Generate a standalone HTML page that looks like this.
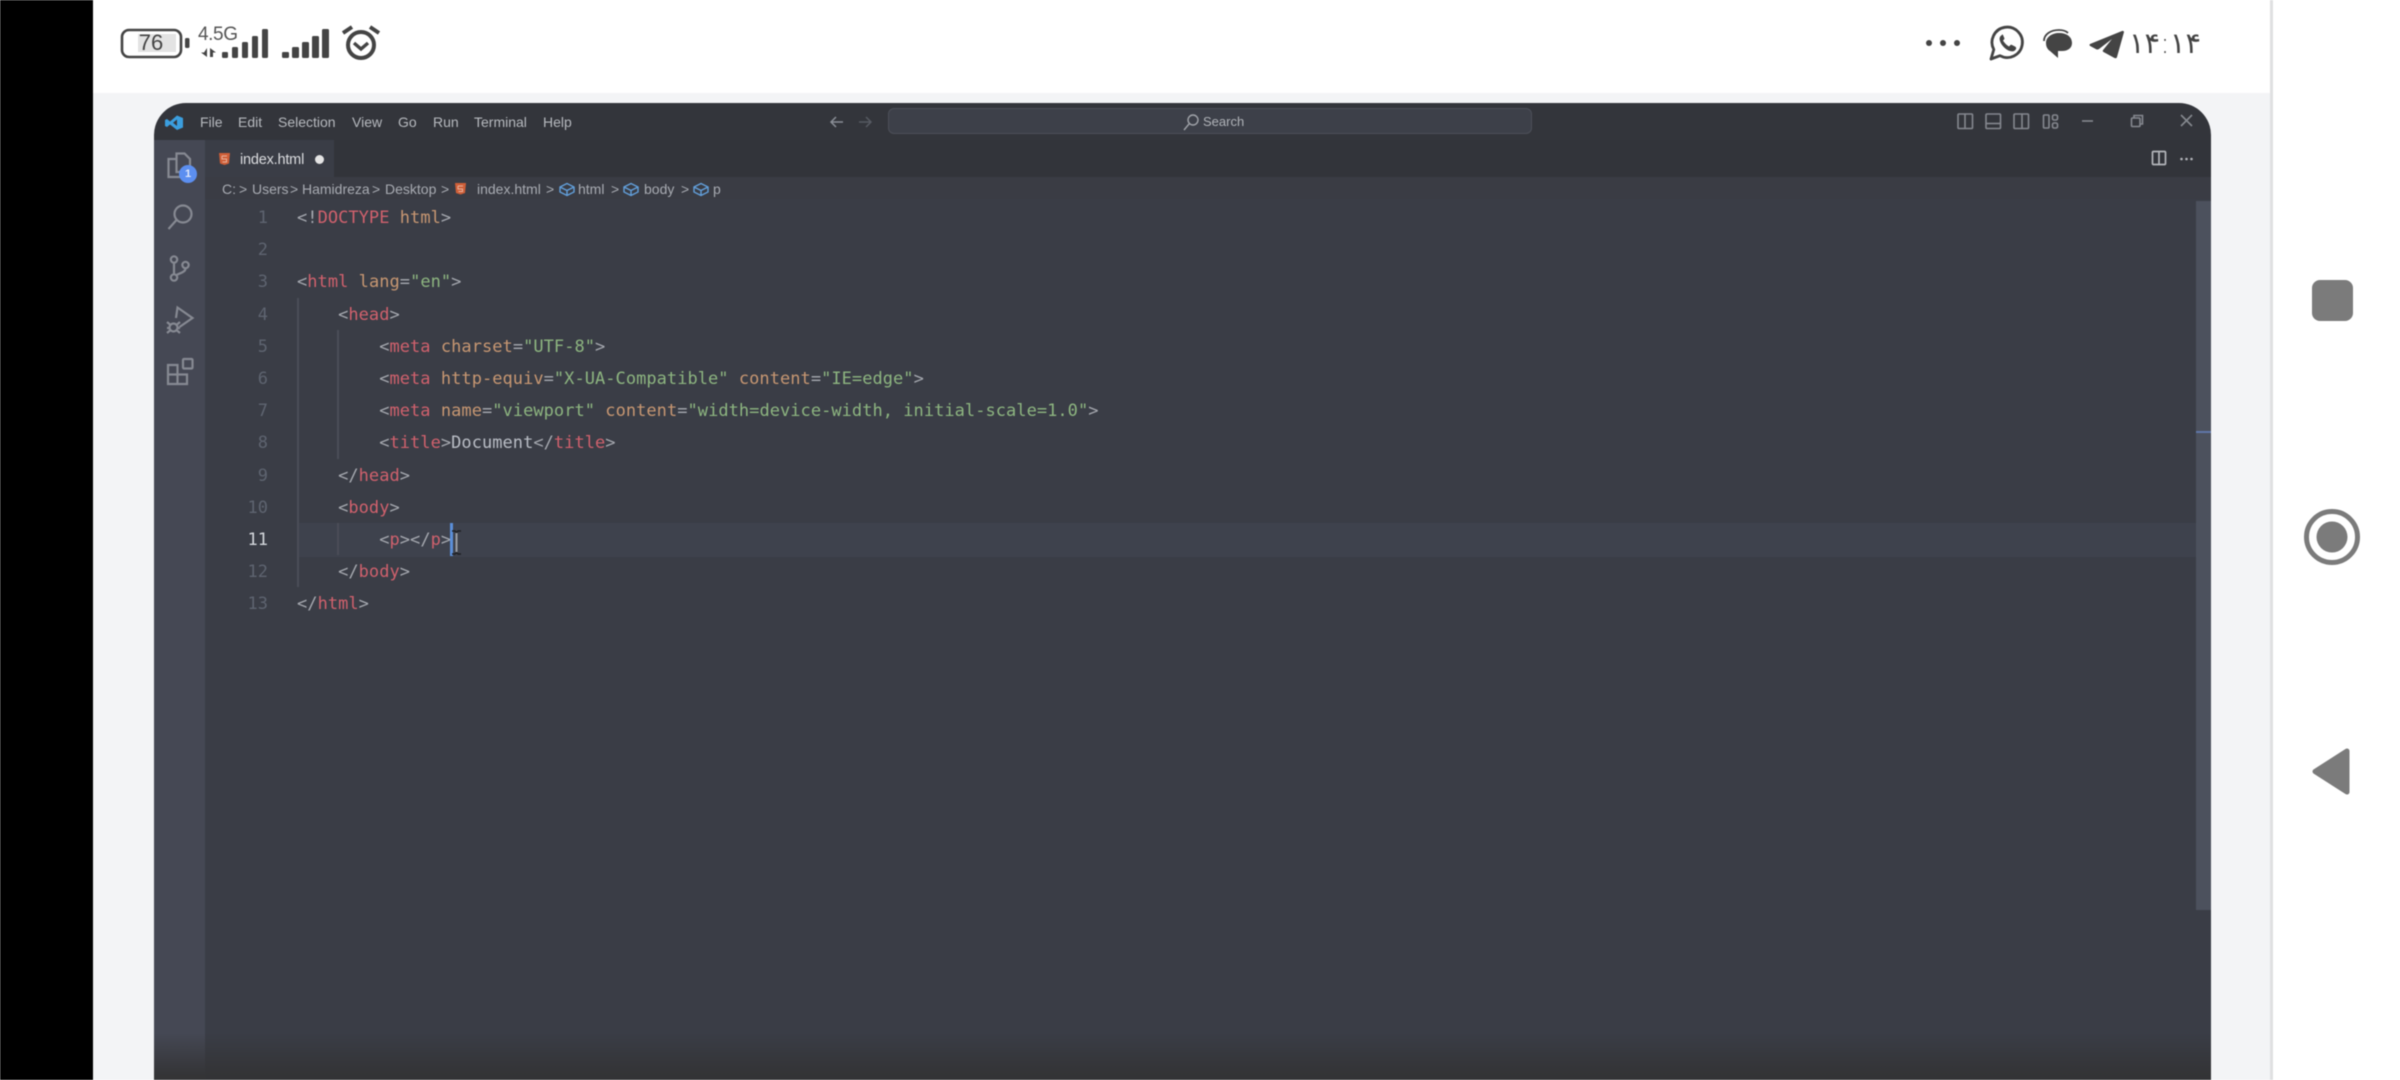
<!DOCTYPE html>
<html lang="en"><head><meta charset="utf-8"><title>VS Code screenshot</title>
<style>
html,body{margin:0;padding:0;width:2400px;height:1080px;overflow:hidden;background:#fff}
*{box-sizing:border-box}
.a{position:absolute}
#win{position:absolute;left:154px;top:103px;width:2057px;height:977px;border-radius:32px 32px 0 0;overflow:hidden;background:#33353b}
#stage{position:absolute;left:0;top:0;width:2400px;height:1080px;font-family:"Liberation Sans",sans-serif;filter:blur(.45px)}
.m{position:absolute;top:112px;font-size:14px;line-height:20px;color:#b6b9be;white-space:nowrap}
.c{position:absolute;left:297px;height:32px;line-height:32px;font-family:"DejaVu Sans Mono","Liberation Mono",monospace;font-size:17px;letter-spacing:.04px;white-space:pre;color:#a6a9b0}
.n{position:absolute;left:228px;width:40px;height:32px;line-height:32px;text-align:right;font-family:"DejaVu Sans Mono","Liberation Mono",monospace;font-size:17px;color:#5e6470}
.t{color:#d0616d}.k{color:#c79772}.s{color:#8db580}.x{color:#b9bdc5}
.b{position:absolute;top:179px;font-size:14px;line-height:20px;color:#a8abb2;white-space:nowrap}
.g{position:absolute;width:1.5px;background:#4a4d57}
</style></head><body>
<div id="stage">
<div class="a" style="left:0;top:0;width:93px;height:1080px;background:#000"></div>
<div class="a" style="left:93px;top:0;width:2177px;height:93px;background:#fff"></div>
<div class="a" style="left:93px;top:93px;width:2177px;height:987px;background:#f3f4f6"></div>
<div class="a" style="left:2270px;top:0;width:3px;height:1080px;background:#dfe0e1"></div>

<!-- status bar left -->
<svg class="a" style="left:110px;top:20px" width="280" height="50" viewBox="110 20 280 50">
<rect x="122" y="30" width="59" height="27" rx="7" fill="none" stroke="#444" stroke-width="2.6"/>
<rect x="138" y="34" width="38" height="18" fill="#e3e3e3"/>
<rect x="185" y="38" width="4.500" height="10" rx="1.5" fill="#444"/>
<path d="M207 48v9l-6-4.500h3zM210 48l6 4.500h-3v4.500h-3z" fill="#444"/>
<g fill="#444">
<rect x="222" y="52" width="6" height="6" rx="1.200"/><rect x="232" y="47" width="6" height="11" rx="1.500"/><rect x="242" y="42" width="6" height="16" rx="1.500"/><rect x="252" y="36" width="6" height="22" rx="1.500"/><rect x="262" y="29" width="6" height="29" rx="1.500"/>
<rect x="282" y="52" width="7" height="6" rx="1.200"/><rect x="292" y="47" width="7" height="11" rx="1.500"/><rect x="302" y="42" width="7" height="16" rx="1.500"/><rect x="312" y="36" width="7" height="22" rx="1.500"/><rect x="322" y="29" width="7" height="29" rx="1.500"/>
</g>
<circle cx="361" cy="45" r="13" fill="none" stroke="#444" stroke-width="4"/>
<path d="M354 43l7 6 7-6" fill="none" stroke="#444" stroke-width="3.4"/>
<path d="M343 33l9-6M379 33l-9-6" fill="none" stroke="#444" stroke-width="4"/>
</svg>
<div class="a" style="left:136px;top:31px;width:30px;height:24px;line-height:24px;text-align:center;font-size:22px;color:#444">76</div>
<div class="a" style="left:198px;top:23px;font-size:19px;line-height:24px;color:#555;letter-spacing:-.4px">4.5G</div>

<!-- status bar right -->
<svg class="a" style="left:1920px;top:20px" width="210" height="46" viewBox="1920 20 210 46">
<g fill="#444"><circle cx="1929" cy="43" r="3"/><circle cx="1943" cy="43" r="3"/><circle cx="1957" cy="43" r="3"/></g>
<path d="M1991 59l2.800-9.500A15.200 15.200 0 1 1 2000 55.700z" fill="none" stroke="#444" stroke-width="2.800" stroke-linejoin="round"/>
<path d="M2002 35c-2 1-3 3-2 6 1 4 6 9 10 10 3 1 5 0 6-2 .5-1 0-2-1-2.500l-3-1.500c-1-.5-1.500 0-2 .5l-1 1c-2-1-5-4-6-6l1-1c.5-.5.5-1 .2-1.800l-1.200-2.700c-.4-.7-1-.8-1-.5z" fill="#444"/>
<path d="M2059 33c8 0 13 4 13 10 0 5-4 8-10 8h-4v7l-8-7c-3-2-4-5-4-8 0-6 6-10 13-10z" fill="#444"/>
<path d="M2044 41c0-7 7-11 15-11 4 0 7 1 9 3" fill="none" stroke="#444" stroke-width="1.800"/>
<path d="M2090 44l32-13c1-.5 2 .2 2 1l-7 25c-.3 1.300-1.500 1.500-2.500 1l-11-6c-1-.5-1-1.500-.2-2.200L2112 39 2099 49c-1 .6-1.800.6-2.800.2l-6-3.200c-1-.5-1-1.600 0-2z" fill="#444"/>
</svg>
<div class="a" style="left:2126px;top:24px;width:78px;height:38px;line-height:38px;font-family:'DejaVu Sans',sans-serif;font-size:29px;color:#444;text-align:center;letter-spacing:-1.6px;direction:ltr;font-weight:300">۱۴:۱۴</div>

<!-- right nav -->
<div class="a" style="left:2312px;top:280px;width:41px;height:41px;border-radius:8px;background:#7b7b7b"></div>
<svg class="a" style="left:2300px;top:500px" width="70" height="310" viewBox="2300 500 70 310">
<circle cx="2332" cy="537" r="25.500" fill="none" stroke="#7b7b7b" stroke-width="5"/>
<circle cx="2332" cy="537" r="15.500" fill="#7b7b7b"/>
<path d="M2347 751L2315 771.500 2347 792z" fill="#7b7b7b" stroke="#7b7b7b" stroke-width="5" stroke-linejoin="round"/>
</svg>

<!-- VS Code window -->
<div id="win">
<div class="a" style="left:0;top:37px;width:51px;height:940px;background:#454854"></div>
<div class="a" style="left:51px;top:37px;width:2006px;height:37px;background:#32343a"></div>
<div class="a" style="left:51px;top:37px;width:129px;height:37px;background:#3a3d46"></div>
<div class="a" style="left:51px;top:74px;width:2006px;height:22px;background:#3a3c44"></div>
<div class="a" style="left:51px;top:96px;width:2006px;height:881px;background:#3a3d46"></div>
<div class="a" style="left:144px;top:420px;width:1898px;height:34px;background:#3e424d"></div>
<div class="a" style="left:2042px;top:98px;width:15px;height:709px;background:#4c515d"></div>
<div class="a" style="left:2042px;top:328px;width:15px;height:2px;background:#5f76a8"></div>
<div class="a" style="left:0;top:930px;width:2057px;height:47px;background:linear-gradient(to bottom,rgba(51,51,53,0),rgba(51,51,53,.95) 90%)"></div>
</div>

<!-- title bar -->
<svg class="a" style="left:160px;top:110px" width="28" height="24" viewBox="160 110 28 24">
<path d="M177 115.500l6 2.500v9.500l-6 2.500-7-5.500-3 2.500-2-1v-6l2-1 3 2.500z" fill="#3b9ede"/>
<path d="M177 119.500l-4 3.300 4 3.200z" fill="#33353b"/>
</svg>
<div class="m" style="left:200px">File</div><div class="m" style="left:238px">Edit</div><div class="m" style="left:278px">Selection</div><div class="m" style="left:352px">View</div><div class="m" style="left:398px">Go</div><div class="m" style="left:433px">Run</div><div class="m" style="left:474px">Terminal</div><div class="m" style="left:543px">Help</div>

<svg class="a" style="left:825px;top:110px" width="55" height="24" viewBox="825 110 55 24">
<path d="M843 122h-12M836 117l-5 5 5 5" fill="none" stroke="#8a8e96" stroke-width="1.500"/>
<path d="M859 122h12M866 117l5 5-5 5" fill="none" stroke="#565a62" stroke-width="1.500"/>
</svg>
<div class="a" style="left:888px;top:108px;width:644px;height:26px;background:#3d4049;border:1.500px solid #4c4f58;border-radius:6px"></div>
<svg class="a" style="left:1180px;top:111px" width="22" height="22" viewBox="1180 111 22 22">
<circle cx="1193" cy="120" r="5" fill="none" stroke="#a0a3a9" stroke-width="1.400"/><path d="M1189 124l-5 6" stroke="#a0a3a9" stroke-width="1.400"/>
</svg>
<div class="m" style="left:1203px;color:#b0b3b8;font-size:13px">Search</div>

<svg class="a" style="left:1950px;top:105px" width="260" height="70" viewBox="1950 105 260 70">
<g fill="none" stroke="#85888f" stroke-width="1.600">
<rect x="1958" y="114" width="14.500" height="14.500" rx="1"/><path d="M1965 114v14.500"/>
<rect x="1986" y="114" width="14.500" height="14.500" rx="1"/><path d="M1986 123.500h14.500"/>
<rect x="2014" y="114" width="14.500" height="14.500" rx="1"/><path d="M2022 114v14.500"/>
<rect x="2043.500" y="115" width="5.500" height="13" rx="1"/><rect x="2052.500" y="115" width="5" height="5" rx="1.500"/><rect x="2052.500" y="123" width="5" height="5" rx="1.500"/>
<path d="M2082 121h11"/>
<rect x="2131.500" y="118" width="8.500" height="8.500" rx="1"/><path d="M2134 118v-2.500h8.500v8.500h-2.500"/>
<path d="M2181 115l11 11M2192 115l-11 11"/>
</g>
<g fill="none" stroke="#b4b6bb" stroke-width="1.700"><rect x="2152.500" y="151.500" width="13" height="13" rx="1"/><path d="M2159 151.500v13"/></g>
<g fill="#b4b6bb"><circle cx="2181.500" cy="159" r="1.300"/><circle cx="2186.500" cy="159" r="1.300"/><circle cx="2191.500" cy="159" r="1.300"/></g>
</svg>

<!-- activity bar -->
<svg class="a" style="left:160px;top:148px" width="40" height="240" viewBox="160 148 40 240">
<g fill="none" stroke="#868992" stroke-width="2.200">
<path d="M176 159h-7.500v18h14v-5"/><path d="M176.500 153.500h8l5.500 5.500v13h-13.500z"/>
<circle cx="183" cy="214" r="8.500"/><path d="M176.500 220l-8 9" />
<circle cx="174" cy="259.500" r="3.200"/><circle cx="174" cy="277.500" r="3.200"/><circle cx="185.500" cy="265" r="3.200"/><path d="M174 263v11M185.500 268.500c0 4-7 5-9 6.500"/>
<path d="M176 318l1.500-10.500 15 10.500-13 9"/><circle cx="173.500" cy="327.500" r="4"/><path d="M167 322l3 2.500M180 322l-3 2.500M167 328h2.500M180 328h-2.500M167 333l3-2.500M180 333l-3-2.500"/>
<path d="M168 365h9.500v9.500H187v9.500h-19zM168 374.500h9.500v9.500"/><rect x="183" y="359" width="9.500" height="9.500" rx="1"/>
</g>
</svg>
<div class="a" style="left:179px;top:165px;width:18px;height:18px;border-radius:50%;background:#5c8ff0;color:#dfe8fb;font-size:11px;font-weight:bold;line-height:18px;text-align:center">1</div>

<!-- tab -->
<svg class="a" style="left:217px;top:151px" width="16" height="16" viewBox="217 151 16 16">
<path d="M219 153h11l-1 10.500-4.500 1.500-4.500-1.500z" fill="#cf5f38"/><path d="M222 156h5M222 156v3h4.500v3h-4" fill="none" stroke="#e8b29e" stroke-width="1"/>
</svg>
<div class="a" style="left:240px;top:150px;font-size:14.500px;line-height:20px;color:#dcdde0;letter-spacing:-.2px">index.html</div>
<div class="a" style="left:314.500px;top:154.500px;width:9px;height:9px;border-radius:50%;background:#e4e4e4"></div>

<!-- breadcrumbs -->
<div class="b" style="left:222px">C:</div><div class="b" style="left:239px">&gt;</div>
<div class="b" style="left:252px">Users</div><div class="b" style="left:290px">&gt;</div>
<div class="b" style="left:302px">Hamidreza</div><div class="b" style="left:372px">&gt;</div>
<div class="b" style="left:385px">Desktop</div><div class="b" style="left:441px">&gt;</div>
<div class="b" style="left:477px">index.html</div><div class="b" style="left:546px">&gt;</div>
<div class="b" style="left:578px">html</div><div class="b" style="left:611px">&gt;</div>
<div class="b" style="left:644px">body</div><div class="b" style="left:681px">&gt;</div>
<div class="b" style="left:713px">p</div>
<svg class="a" style="left:452px;top:180px" width="270" height="18" viewBox="452 180 270 18">
<path d="M455 183h11l-1 10-4.500 1.500-4.500-1.500z" fill="#cf5f38"/><path d="M458 186h5M458 186v3h4.500v2.500h-4" fill="none" stroke="#e8b29e" stroke-width="1"/>
<g fill="none" stroke="#62a0dc" stroke-width="1.400">
<path d="M560 187l7-3.500 7 3.500v5l-7 3.500-7-3.500zM560 187l7 3.500 7-3.500M567 190.500v5"/>
<path d="M624 187l7-3.500 7 3.500v5l-7 3.500-7-3.500zM624 187l7 3.500 7-3.500M631 190.500v5"/>
<path d="M694 187l7-3.500 7 3.500v5l-7 3.500-7-3.500zM694 187l7 3.500 7-3.500M701 190.500v5"/>
</g>
</svg>

<!-- indent guides -->
<div class="g" style="left:297px;top:298px;height:289px"></div>
<div class="g" style="left:337px;top:330px;height:129px"></div>
<div class="g" style="left:337px;top:523px;height:32px"></div>

<!-- line numbers -->
<div class="n" style="top:201.500px">1</div>
<div class="n" style="top:233.500px">2</div>
<div class="n" style="top:266px">3</div>
<div class="n" style="top:298.500px">4</div>
<div class="n" style="top:330.500px">5</div>
<div class="n" style="top:363px">6</div>
<div class="n" style="top:395px">7</div>
<div class="n" style="top:427px">8</div>
<div class="n" style="top:459.500px">9</div>
<div class="n" style="top:491.500px">10</div>
<div class="n" style="top:524px;color:#d3d6db">11</div>
<div class="n" style="top:556px">12</div>
<div class="n" style="top:588px">13</div>

<!-- code -->
<div class="c" style="top:201.500px">&lt;!<span class="t">DOCTYPE</span> <span class="k">html</span>&gt;</div>
<div class="c" style="top:266px">&lt;<span class="t">html</span> <span class="k">lang</span>=<span class="s">"en"</span>&gt;</div>
<div class="c" style="top:298.500px">    &lt;<span class="t">head</span>&gt;</div>
<div class="c" style="top:330.500px">        &lt;<span class="t">meta</span> <span class="k">charset</span>=<span class="s">"UTF-8"</span>&gt;</div>
<div class="c" style="top:363px">        &lt;<span class="t">meta</span> <span class="k">http-equiv</span>=<span class="s">"X-UA-Compatible"</span> <span class="k">content</span>=<span class="s">"IE=edge"</span>&gt;</div>
<div class="c" style="top:395px">        &lt;<span class="t">meta</span> <span class="k">name</span>=<span class="s">"viewport"</span> <span class="k">content</span>=<span class="s">"width=device-width, initial-scale=1.0"</span>&gt;</div>
<div class="c" style="top:427px">        &lt;<span class="t">title</span>&gt;<span class="x">Document</span>&lt;/<span class="t">title</span>&gt;</div>
<div class="c" style="top:459.500px">    &lt;/<span class="t">head</span>&gt;</div>
<div class="c" style="top:491.500px">    &lt;<span class="t">body</span>&gt;</div>
<div class="c" style="top:524px">        &lt;<span class="t">p</span>&gt;&lt;/<span class="t">p</span>&gt;</div>
<div class="c" style="top:556px">    &lt;/<span class="t">body</span>&gt;</div>
<div class="c" style="top:588px">&lt;/<span class="t">html</span>&gt;</div>

<!-- cursor -->
<div class="a" style="left:450px;top:523px;width:2.500px;height:33px;background:#5b8fd9"></div>
<svg class="a" style="left:450px;top:525px" width="14" height="32" viewBox="450 525 14 32">
<path d="M452 531h3l1.500 1.500L458 531h3M452 554h3l1.500-1.500L458 554h3" fill="none" stroke="#1e1f22" stroke-width="1.400"/>
<path d="M456.500 533v19" stroke="#9a9da3" stroke-width="2"/>
</svg>
</div>
</body></html>
